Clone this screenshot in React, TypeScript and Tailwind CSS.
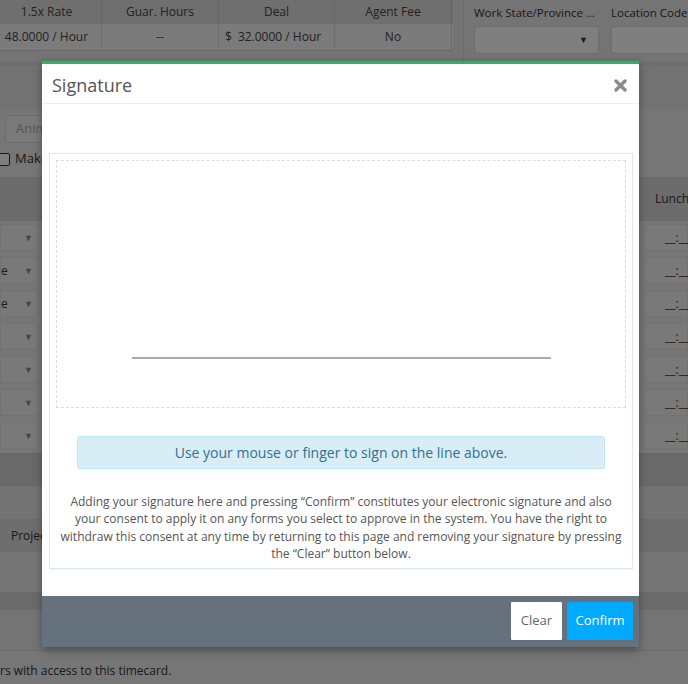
import React from "react";

const Arrow = () => <span className="text-[9px] text-[#888]">▼</span>;

function LeftRows() {
  const rows = ["", "e", "e", "", "", "", ""];
  return (
    <div className="flex flex-col">
      {rows.map((t, i) => (
        <div key={i} className="h-[33px] flex items-center">
          <div className="h-[27px] w-[38px] flex items-center justify-between border border-[#e4e4e4] bg-[#f3f3f3] pr-[4px] text-[12px] text-[#333]">
            <span>{t}</span>
            <Arrow />
          </div>
        </div>
      ))}
    </div>
  );
}

function RightRows() {
  return (
    <div className="flex flex-col items-end">
      {Array.from({ length: 7 }).map((_, i) => (
        <div key={i} className="h-[33px] flex items-center">
          <div className="h-[27px] w-[44px] flex items-center border border-[#e4e4e4] bg-[#f3f3f3] pl-[20px] text-[12px] text-[#333] whitespace-nowrap">
            __:__
          </div>
        </div>
      ))}
    </div>
  );
}

export default function App() {
  return (
    <div
      className="relative w-[688px] h-[684px] overflow-hidden bg-[#ececec] text-[#333]"
      style={{ fontFamily: '"Open Sans", "Liberation Sans", sans-serif' }}
    >
      {/* top section */}
      <div className="flex h-[62px] bg-[#e8e8e8]">
        <div className="w-[453px] shrink-0 flex flex-col">
          <div className="flex h-[24px] bg-[#dedede] text-[12px] text-[#444]">
            <div className="w-[102px] flex items-center justify-center pr-[8px] border-r border-[#d0d0d0]">1.5x Rate</div>
            <div className="w-[117px] flex items-center justify-center border-r border-[#d0d0d0]">Guar. Hours</div>
            <div className="w-[116px] flex items-center justify-center border-r border-[#d0d0d0]">Deal</div>
            <div className="w-[117px] flex items-center justify-center border-r border-[#d0d0d0]">Agent Fee</div>
          </div>
          <div className="flex h-[27px] bg-[#f6f6f6] text-[12px] text-[#444] border-b border-[#d4d4d4]">
            <div className="w-[102px] flex items-center justify-center pr-[8px] border-r border-[#dddddd]">48.0000 / Hour</div>
            <div className="w-[117px] flex items-center justify-center border-r border-[#dddddd]">--</div>
            <div className="w-[116px] flex items-center pl-[6px] gap-[6px] border-r border-[#dddddd]">
              <span>$</span>
              <span>32.0000 / Hour</span>
            </div>
            <div className="w-[117px] flex items-center justify-center border-r border-[#d4d4d4]">No</div>
          </div>
        </div>
        <div className="ml-[10px] flex-1 border-l border-[#d6d6d6] pl-[10px] flex gap-[12px] overflow-hidden">
          <div className="flex flex-col shrink-0">
            <div className="h-[26px] flex items-center text-[11.5px] text-[#333] whitespace-nowrap">Work State/Province ...</div>
            <div className="h-[28px] w-[125px] bg-white border border-[#d8d8d8] rounded-[3px] flex items-center justify-end pr-[10px]">
              <span className="text-[9px] text-[#333]">▼</span>
            </div>
          </div>
          <div className="flex flex-col shrink-0">
            <div className="h-[26px] flex items-center text-[11.5px] text-[#333] whitespace-nowrap">Location Code</div>
            <div className="h-[28px] w-[90px] bg-white border border-[#d8d8d8] rounded-[3px]" />
          </div>
        </div>
      </div>
      <div className="h-[4px] bg-[#dcdcdc]" />
      {/* middle section */}
      <div className="h-[43px] bg-[#e4e4e4]" />
      <div className="h-[40px] flex items-center pl-[5px] bg-[#ececec]">
        <div className="h-[28px] w-[60px] border border-[#d8d8d8] bg-[#f4f4f4] rounded-[3px] flex items-center pl-[10px] text-[13px] text-[#aaa]">Animal</div>
      </div>
      <div className="h-[20px] flex items-center gap-[5px] -ml-[3px] bg-[#ececec]">
        <div className="w-[13px] h-[13px] border border-[#333] rounded-[2px] bg-white" />
        <span className="text-[13px] text-[#333]">Make</span>
      </div>
      <div className="h-[8px] bg-[#ececec]" />
      <div className="h-[44px] bg-[#d8d8d8] flex items-center justify-end">
        <span className="text-[12px] text-[#333] -mr-[4px] w-[37px]">Lunch</span>
      </div>
      <div className="flex justify-between bg-[#ececec] h-[232px]">
        <LeftRows />
        <RightRows />
      </div>
      <div className="h-[33px] bg-[#d2d2d2]" />
      <div className="h-[34px] bg-[#e6e6e6] border-b border-[#dadada]" />
      <div className="h-[32px] bg-[#dcdcdc] flex items-center pl-[11px] text-[12px] text-[#333]">Project</div>
      <div className="h-[40px] bg-[#eaeaea]" />
      <div className="h-[18px] bg-[#d6d6d6]" />
      <div className="h-[41px] bg-[#e8e8e8] border-b border-[#d8d8d8]" />
      <div className="h-[40px] flex items-center text-[12px] text-[#333] bg-[#ececec]">rs with access to this timecard.</div>

      {/* overlay */}
      <div className="absolute inset-0 bg-black/50" />

      {/* modal */}
      <div className="absolute left-[42px] top-[61px] w-[597px] bg-white border-t-[3px] border-[#1fbb5a] shadow-[0_3px_8px_rgba(0,0,0,0.35)]">
        <div className="h-[40px] border-b border-[#eeeeee] flex items-center justify-between pl-[10px] pr-[12px] pt-[3px]">
          <span className="text-[18px] text-[#555] leading-none">Signature</span>
          <svg width="13" height="13" viewBox="0 0 13 13">
            <path d="M2 2 L11 11 M11 2 L2 11" stroke="#8a8a8a" strokeWidth="3.4" strokeLinecap="round" />
          </svg>
        </div>
        <div className="pt-[49px] pb-[27px] pl-[7px] pr-[6px]">
          <div className="border border-[#e2e8ea] shadow-[0_1px_1px_rgba(0,0,0,0.04)] p-[6px]">
            <div className="h-[248px] border border-dashed border-[#dcdcdc] flex flex-col items-center">
              <div className="mt-[196px] w-[419px] h-[2px] bg-[#aaaaaa]" />
            </div>
            <div className="mt-[28px] mx-[21px] h-[33px] bg-[#d9edf7] border border-[#bce8f1] rounded-[3px] flex items-center justify-center text-[14px] text-[#31708f]">
              Use your mouse or finger to sign on the line above.
            </div>
            <p className="mt-[24px] text-center text-[12px] leading-[17.3px] text-[#555] whitespace-nowrap">
              Adding your signature here and pressing “Confirm” constitutes your electronic signature and also
              <br />
              your consent to apply it on any forms you select to approve in the system. You have the right to
              <br />
              withdraw this consent at any time by returning to this page and removing your signature by pressing
              <br />
              the “Clear” button below.
            </p>
          </div>
        </div>
        <div className="h-[51px] bg-[#65717d] flex items-start justify-end gap-[5px] pt-[6px] pr-[6px]">
          <button className="h-[38px] w-[51px] bg-white text-[13px] text-[#666] rounded-[1px]">Clear</button>
          <button className="h-[38px] w-[66px] bg-[#00aaff] text-[13px] text-white rounded-[1px]">Confirm</button>
        </div>
      </div>
    </div>
  );
}
